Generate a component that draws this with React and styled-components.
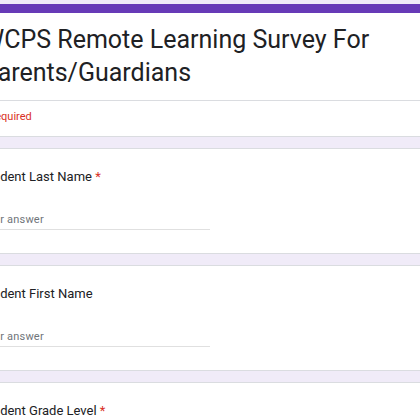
import React from 'react';
import styled, { createGlobalStyle } from 'styled-components';

const GlobalStyle = createGlobalStyle`
  html, body {
    margin: 0;
    padding: 0;
    background: #f0ebf8;
    overflow: hidden;
  }
  * { box-sizing: border-box; }
`;

const questions = [
  { label: 'Student Last Name', required: true },
  { label: 'Student First Name', required: false },
  { label: 'Student Grade Level', required: true },
];

const App = () => {
  return <Page>
    <GlobalStyle />
    <Column>
      <HeaderCard>
        <Title>WCPS Remote Learning Survey For Parents/Guardians</Title>
        <Divider />
        <RequiredNote>* Required</RequiredNote>
      </HeaderCard>
      {questions.map((q) => (
        <QuestionCard key={q.label}>
          <Label>
            {q.label}
            {q.required && <Star> *</Star>}
          </Label>
          <Answer>Your answer</Answer>
        </QuestionCard>
      ))}
    </Column>
  </Page>;
};

const Page = styled.div`
  width: 420px;
  height: 420px;
  overflow: hidden;
  padding-top: 4px;
  font-family: Roboto, "Liberation Sans", sans-serif;
`;

const Column = styled.div`
  width: 500px;
  margin-left: -39px;
  display: flex;
  flex-direction: column;
  gap: 11px;
`;

const Card = styled.div`
  background: #fff;
  border: 1px solid #dadce0;
  border-radius: 7px;
`;

const HeaderCard = styled(Card)`
  border-top: 9px solid #673ab7;
  padding: 10px 0 11px;
`;

const Title = styled.h1`
  margin: 0;
  padding: 0 80px 0 20px;
  font-family: Roboto, "Liberation Sans", sans-serif;
  font-weight: 400;
  font-size: 25px;
  line-height: 33px;
  color: #202124;
`;

const Divider = styled.div`
  height: 1px;
  background: #dadce0;
  margin: 11px 0 8px;
`;

const RequiredNote = styled.div`
  padding: 0 19px;
  font-size: 11px;
  line-height: 16px;
  color: #d93025;
`;

const QuestionCard = styled(Card)`
  padding: 18px 19px 23px;
`;

const Label = styled.div`
  font-size: 13px;
  line-height: 19px;
  color: #202124;
`;

const Star = styled.span`
  color: #d93025;
`;

const Answer = styled.div`
  margin-top: 23px;
  width: 229px;
  height: 21px;
  padding-top: 1px;
  font-size: 11px;
  line-height: 19px;
  letter-spacing: 0.2px;
  color: #70757a;
  border-bottom: 1px solid #e0e0e0;
`;

export default App;
